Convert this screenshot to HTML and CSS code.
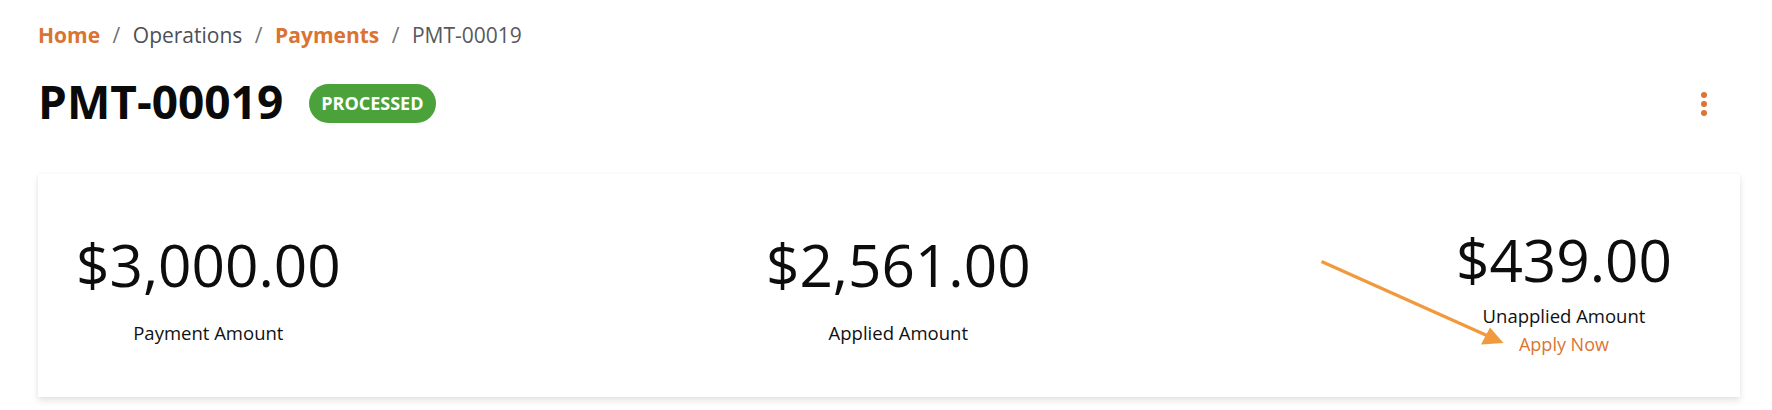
FILE: index.html
```html
<!DOCTYPE html>
<html lang="en">
<head>
<meta charset="utf-8">
<title>PMT-00019</title>
<link rel="stylesheet" href="styles.css">
</head>
<body>
<div class="page">
  <nav class="breadcrumb">
    <a class="crumb link" href="#">Home</a>
    <span class="sep">/</span>
    <span class="crumb plain">Operations</span>
    <span class="sep">/</span>
    <a class="crumb link" href="#">Payments</a>
    <span class="sep">/</span>
    <span class="crumb current">PMT-00019</span>
  </nav>

  <header class="header">
    <div class="title-group">
      <h1 class="title">PMT-00019</h1>
      <span class="badge">PROCESSED</span>
    </div>
    <button class="kebab" aria-label="More actions">
      <svg width="6" height="24" viewBox="0 0 6 24"><circle cx="3" cy="3" r="3"/><circle cx="3" cy="12" r="3"/><circle cx="3" cy="21" r="3"/></svg>
    </button>
  </header>

  <section class="card">
    <div class="stat">
      <div class="amount">$3,000.00</div>
      <div class="label">Payment Amount</div>
    </div>
    <div class="stat">
      <div class="amount">$2,561.00</div>
      <div class="label">Applied Amount</div>
    </div>
    <div class="stat stat-right">
      <div class="amount">$439.00</div>
      <div class="label">Unapplied Amount</div>
      <a class="apply" href="#">Apply Now</a>
    </div>
  </section>
</div>

<svg class="annotation" width="1772" height="410" viewBox="0 0 1772 410">
  <line x1="1321.5" y1="261.5" x2="1488" y2="336" stroke="#f19a3d" stroke-width="3.3"/>
  <polygon points="1490,327.5 1481,344.5 1503.5,343" fill="#f19a3d"/>
</svg>
</body>
</html>
```

FILE: styles.css
```css
html, body {
  margin: 0;
  padding: 0;
  background: #ffffff;
}

body {
  font-family: "Open Sans", "Noto Sans", "Liberation Sans", sans-serif;
  color: #111111;
  position: relative;
  width: 1772px;
  height: 410px;
  overflow: hidden;
}

.page {
  padding: 21px 32px 0 38px;
}

.breadcrumb {
  display: flex;
  align-items: baseline;
  font-size: 21px;
  line-height: 28px;
}

.crumb {
  text-decoration: none;
}

.link {
  color: #d97432;
  font-weight: 700;
}

.plain {
  color: #4b4f56;
}

.current {
  color: #55595f;
}

.sep {
  color: #6f7378;
  margin: 0 12.5px;
}

.header {
  display: flex;
  align-items: center;
  justify-content: space-between;
  margin-top: 22px;
}

.title-group {
  display: flex;
  align-items: center;
}

.title {
  margin: 0;
  font-size: 46px;
  line-height: 60px;
  font-weight: 700;
  color: #0a0a0a;
}

.badge {
  margin-left: 26px;
  margin-top: 5px;
  height: 39px;
  line-height: 39px;
  padding: 0 12px;
  border-radius: 20px;
  background: #4ba23a;
  color: #ffffff;
  font-size: 18px;
  font-weight: 700;
}

.kebab {
  margin-top: 5px;
  margin-right: 24px;
  width: 24px;
  height: 30px;
  padding: 0;
  border: 0;
  background: transparent;
  display: flex;
  align-items: center;
  justify-content: center;
  fill: #d97432;
}

.card {
  margin-top: 43px;
  height: 223px;
  box-sizing: border-box;
  padding: 54px 68px 0 38px;
  display: flex;
  justify-content: space-between;
  align-items: flex-start;
  background: #ffffff;
  box-shadow: 0 4px 7px rgba(0, 0, 0, 0.10), 0 0 3px rgba(0, 0, 0, 0.05);
}

.stat {
  display: flex;
  flex-direction: column;
  align-items: center;
  text-align: center;
}

.amount {
  font-size: 58.5px;
  line-height: 72px;
  font-weight: 400;
  color: #0d0d0d;
}

.label {
  margin-top: 21px;
  font-size: 18.5px;
  line-height: 24px;
  font-weight: 500;
  color: #111111;
}

.stat-right {
  margin-top: -5px;
}

.stat-right .label {
  margin-top: 9px;
}

.apply {
  margin-top: 4px;
  font-size: 18px;
  line-height: 24px;
  color: #dc7431;
  text-decoration: none;
}

.annotation {
  position: absolute;
  left: 0;
  top: 0;
  pointer-events: none;
}
```
